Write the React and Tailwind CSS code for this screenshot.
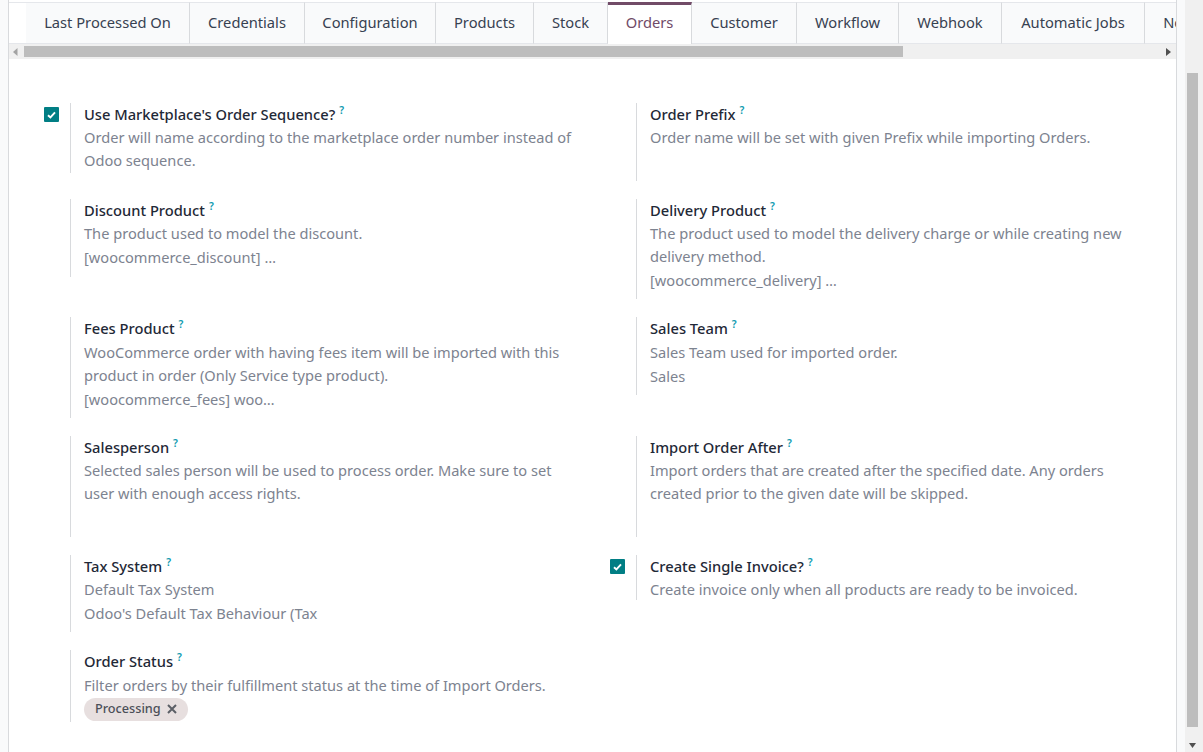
import React from "react";

const tabs = [
    { text: "Last Processed On", width: "w-[164px]" },
    { text: "Credentials", width: "w-[115px]" },
    { text: "Configuration", width: "w-[131px]" },
    { text: "Products", width: "w-[98px]" },
    { text: "Stock", width: "w-[74px]" },
    { text: "Orders", width: "w-[84px]", active: true },
    { text: "Customer", width: "w-[105px]" },
    { text: "Workflow", width: "w-[102px]" },
    { text: "Webhook", width: "w-[103px]" },
    { text: "Automatic Jobs", width: "w-[143px]" },
    { text: "Notes", width: "w-[78px]" },
];

const Check = () => (
    <span className="flex h-[15px] w-[15px] items-center justify-center rounded-[1px] bg-[#017e84]">
        <svg width="9" height="8" viewBox="0 0 9 8" fill="none">
            <path d="M1 4.2 L3.4 6.4 L8 1.4" stroke="white" strokeWidth="1.9" />
        </svg>
    </span>
);

const Setting = ({ title, desc, extra, checked, height, clip, up, children }) => (
    <div className={`flex ${height}`}>
        <div className="w-[61px] shrink-0 pl-[35px] pt-[4px]">{checked && <Check />}</div>
        <div className="min-w-0 flex-1 border-l border-[#d8dadd] pl-[13px]">
            <div className="flex h-[24px] items-center pb-[2px]">
                <span className="text-[14.7px] font-medium text-[#1f2937]">{title}</span>
                <sup className="ml-[4px] translate-y-[1px] text-[10.5px] font-semibold leading-none text-[#0f9bb0]">?</sup>
            </div>
            <div className={up ? "-mt-px" : ""}>
                {desc.map((line) => (
                    <div key={line} className="h-[23px] text-[14.62px] leading-[23px] whitespace-nowrap text-[#7d8390]">{line}</div>
                ))}
                {extra && (
                    <div className={`h-[24px] overflow-hidden text-[14.62px] leading-[24px] whitespace-nowrap text-[#7d8390] ${clip ? "w-[234px]" : ""}`}>{extra}</div>
                )}
            </div>
            {children}
        </div>
    </div>
);

const App = () => {
    return (
        <div className="flex h-[752px] w-[1203px] overflow-hidden bg-white font-['Noto_Sans',sans-serif]">
            <div className="w-[9px] shrink-0 border-r border-[#d8dadd] bg-[#f9fafb]" />
            <div className="flex w-[1167px] shrink-0 flex-col">
                <div className="h-[2px] shrink-0 bg-white" />
                <div className="flex h-[42px] shrink-0 overflow-hidden">
                    <div className="w-[17px] shrink-0 border-y border-[#e5e7eb]" />
                    {tabs.map(({ text, width, active }) => (
                        <div
                            key={text}
                            className={`flex shrink-0 items-center justify-center border-r border-[#d8dadd] text-[14.7px] first:border-l ${width} ${active ? "border-t-[3px] border-t-[#714b67] bg-white pb-[5px] text-[#714b67]" : "border-y border-t-[#e5e7eb] border-b-[#e5e7eb] bg-[#f9fafb] pb-[2px] text-[#374151]"}`}
                        >
                            {text}
                        </div>
                    ))}
                </div>
                <div className="flex h-[15px] shrink-0 items-center bg-[#f0f0f0]">
                    <svg className="ml-[4px]" width="5" height="8" viewBox="0 0 5 8"><path d="M4.5 0 L0 4 L4.5 8 Z" fill="#a3a3a3" /></svg>
                    <div className="ml-[6px] h-[11px] w-[879px] bg-[#bdbdbd]" />
                    <svg className="ml-[263px]" width="5" height="8" viewBox="0 0 5 8"><path d="M0 0 L5 4 L0 8 Z" fill="#505050" /></svg>
                </div>
                <div className="grid grid-cols-[566px_1fr] gap-y-[18px] pt-[44px]">
                    <Setting up checked height="h-[70px]" title="Use Marketplace's Order Sequence?" desc={["Order will name according to the marketplace order number instead of", "Odoo sequence."]} />
                    <Setting up height="h-[78px]" title="Order Prefix" desc={["Order name will be set with given Prefix while importing Orders."]} />
                    <Setting up height="h-[78px]" title="Discount Product" desc={["The product used to model the discount."]} extra="[woocommerce_discount] …" />
                    <Setting up height="h-[100px]" title="Delivery Product" desc={["The product used to model the delivery charge or while creating new", "delivery method."]} extra="[woocommerce_delivery] …" />
                    <Setting height="h-[101px]" title="Fees Product" desc={["WooCommerce order with having fees item will be imported with this", "product in order (Only Service type product)."]} extra="[woocommerce_fees] woo…" />
                    <Setting height="h-[78px]" title="Sales Team" desc={["Sales Team used for imported order."]} extra="Sales" />
                    <Setting up height="h-[101px]" title="Salesperson" desc={["Selected sales person will be used to process order. Make sure to set", "user with enough access rights."]} />
                    <Setting up height="h-[101px]" title="Import Order After" desc={["Import orders that are created after the specified date. Any orders", "created prior to the given date will be skipped."]} />
                    <Setting up height="h-[77px]" title="Tax System" desc={["Default Tax System"]} extra="Odoo's Default Tax Behaviour (Tax" clip />
                    <Setting up checked height="h-[45px]" title="Create Single Invoice?" desc={["Create invoice only when all products are ready to be invoiced."]} />
                    <Setting height="h-[72px]" title="Order Status" desc={["Filter orders by their fulfillment status at the time of Import Orders."]}>
                        <div className="mt-[1px] flex h-[23px] w-[104px] items-center rounded-full bg-[#e7dfdf] pb-[1px] pl-[11px] text-[12.7px] font-medium text-[#4b4f58]">
                            Processing
                            <svg className="ml-[6px]" width="10" height="10" viewBox="0 0 10 10"><path d="M1 1 L9 9 M9 1 L1 9" stroke="#5b5f66" strokeWidth="2" /></svg>
                        </div>
                    </Setting>
                </div>
            </div>
            <div className="flex flex-1 border-l border-[#d8dadd]">
                <div className="w-[8px] bg-[#f9fafb]" />
                <div className="flex flex-1 flex-col items-center bg-[#f0f0f0] pl-[2px] pr-[5px] pt-[73px]">
                    <div className="h-[654px] w-[11px] bg-[#bdbdbd]" />
                    <svg className="mt-[16px]" width="7" height="5" viewBox="0 0 7 5"><path d="M0 0 L7 0 L3.5 5 Z" fill="#505050" /></svg>
                </div>
            </div>
        </div>
    );
};

export default App;
